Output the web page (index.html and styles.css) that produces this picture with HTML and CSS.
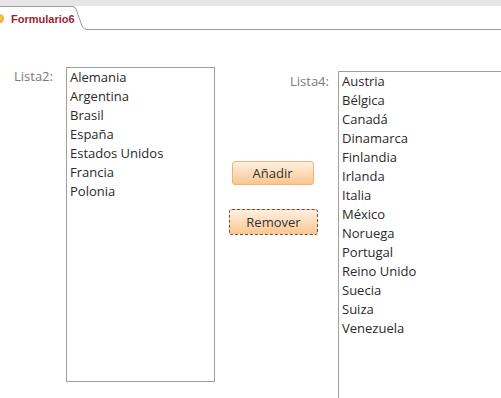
FILE: index.html
```html
<!DOCTYPE html>
<html lang="es">
<head>
  <meta charset="UTF-8" />
  <title>Formulario6</title>
  <link rel="stylesheet" href="styles.css">
</head>
<body>
  <header class="tabstrip">
    <div class="tab">
      <span class="tab-icon"></span>
      <span class="tab-title">Formulario6</span>
    </div>
    <svg class="tab-edge" width="16" height="30" viewBox="0 0 16 30">
      <path d="M0 6.5 Q3 6.5 4 9 L10 26 Q11.5 29.5 15 29.5 H16" fill="none" stroke="#9a9a9a" stroke-width="1"/>
    </svg>
    <div class="tab-rest"></div>
  </header>

  <main class="form">
    <div class="field field-left">
      <label class="field-label">Lista2:</label>
      <ul class="listbox listbox-left">
        <li>Alemania</li>
        <li>Argentina</li>
        <li>Brasil</li>
        <li>España</li>
        <li>Estados Unidos</li>
        <li>Francia</li>
        <li>Polonia</li>
      </ul>
    </div>

    <div class="actions">
      <button class="btn btn-add">Añadir</button>
      <button class="btn btn-remove">Remover</button>
    </div>

    <div class="field field-right">
      <label class="field-label">Lista4:</label>
      <ul class="listbox listbox-right">
        <li>Austria</li>
        <li>Bélgica</li>
        <li>Canadá</li>
        <li>Dinamarca</li>
        <li>Finlandia</li>
        <li>Irlanda</li>
        <li>Italia</li>
        <li>México</li>
        <li>Noruega</li>
        <li>Portugal</li>
        <li>Reino Unido</li>
        <li>Suecia</li>
        <li>Suiza</li>
        <li>Venezuela</li>
      </ul>
    </div>
  </main>
</body>
</html>
```

FILE: styles.css
```css
body { margin: 0; background: #fff; font-family: "Open Sans", sans-serif; overflow: hidden; }

.tabstrip {
  display: flex; height: 30px;
  background: linear-gradient(#e6e6e6 0 6px, #fff 6px);
}
.tab {
  width: 72px; flex: none; background: #fff; border-top: 1px solid #9a9a9a;
  margin-top: 6px; display: flex; align-items: center;
}
.tab-icon {
  flex: none; width: 9px; height: 9px; border-radius: 50%;
  background: radial-gradient(circle at 40% 40%, #ffd25a, #e8951c);
  margin-left: -5px; margin-right: 7px;
}
.tab-title {
  font-family: "Liberation Sans", sans-serif; font-weight: bold;
  font-size: 11px; color: #9c1f35; white-space: nowrap;
}
.tab-edge { display: block; flex: none; }
.tab-rest {
  flex: 1; height: 30px; box-sizing: border-box; border-bottom: 1px solid #9a9a9a;
}

.form { display: flex; align-items: flex-start; }
.field { display: flex; align-items: flex-start; }
.field-label { color: #7a7a7a; font-size: 13px; }
.field-left { margin-top: 37px; padding-left: 14px; }
.field-left .field-label { width: 52px; }
.field-right { margin-top: 41px; margin-left: -28px; }
.field-right .field-label { width: 48px; padding-top: 1px; }

.listbox {
  list-style: none; margin: 0; padding: 0 3px; box-sizing: border-box;
  border: 1px solid #a0a0a0; font-size: 13px; color: #2a2a2a; line-height: 19px;
}
.listbox-left { width: 149px; height: 315px; }
.listbox-right { width: 170px; height: 340px; }

.actions {
  display: flex; flex-direction: column; align-items: center;
  width: 89px; margin-left: 14px; margin-top: 131px; gap: 24px;
}
.btn {
  font-family: "Open Sans", sans-serif; font-size: 13px; color: #333;
  background: linear-gradient(#fef0e2, #fbc68f); border-radius: 3px;
  padding: 0; cursor: pointer;
}
.btn-add { width: 82px; height: 24px; border: 1px solid #f4b06c; margin-left: -2px; }
.btn-remove { width: 89px; height: 26px; border: 1px dashed #6b5036; }
```
